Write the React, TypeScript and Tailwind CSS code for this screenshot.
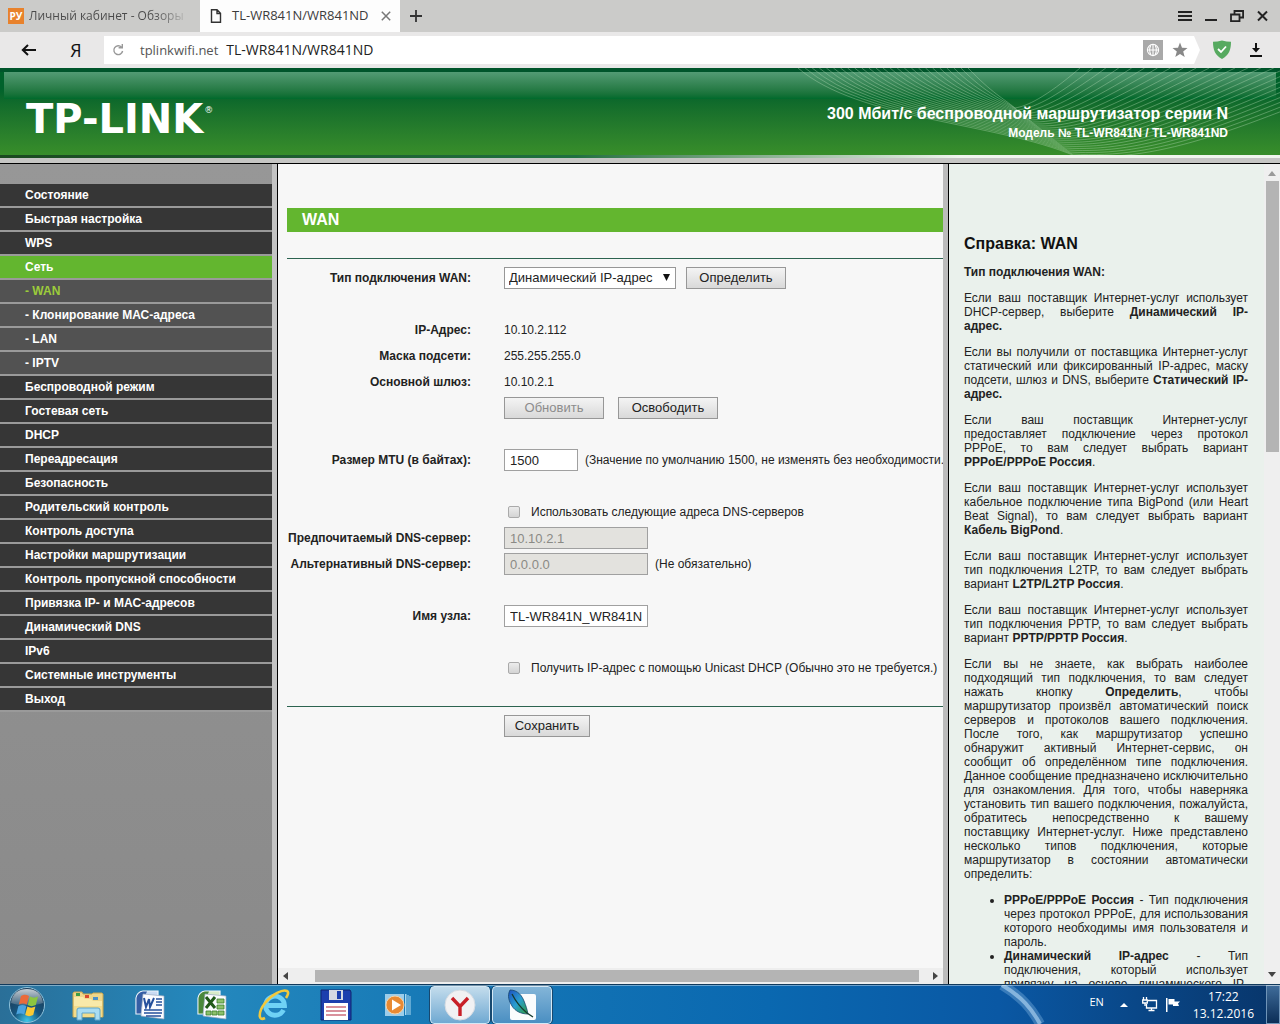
import React from "react";

type Children = { children?: React.ReactNode };

/* ---------- Browser chrome ---------- */

function TabBar() {
  return (
    <div className="flex h-8 shrink-0 items-stretch bg-[#cbcbc9] font-['Open_Sans',sans-serif] text-[13px] text-[#3c3c3c]">
      <button className="flex w-[200px] items-center gap-[5px] pl-2 text-left">
        <span className="flex h-4 w-4 shrink-0 items-center justify-center bg-[#e8822c] text-[10px] font-bold text-white">РУ</span>
        <span className="bg-linear-to-r from-[#4a4a4a] from-80% to-[#b4b4b2] bg-clip-text text-[12px] whitespace-nowrap text-transparent">
          Личный кабинет - Обзоры
        </span>
      </button>
      <div className="flex w-[200px] items-center bg-[#fdfdfd] pl-[10px]">
        <svg width="12" height="16" viewBox="0 0 12 16" fill="none" stroke="#333" strokeWidth="1.4">
          <path d="M1.5 1.7h5.5l3.5 3.6v9H1.5z M7 1.7v3.8h3.5" />
        </svg>
        <span className="flex-1 pl-[10px] whitespace-nowrap">TL-WR841N/WR841ND</span>
        <button aria-label="Закрыть вкладку" className="mr-[9px]">
          <svg width="10" height="10" viewBox="0 0 10 10" stroke="#777" strokeWidth="1.5">
            <path d="M.8.8l8.4 8.4M9.2.8L.8 9.2" />
          </svg>
        </button>
      </div>
      <button aria-label="Новая вкладка" className="pl-[10px]">
        <svg width="12" height="12" viewBox="0 0 12 12" stroke="#333" strokeWidth="1.8">
          <path d="M6 0v12M0 6h12" />
        </svg>
      </button>
      <div className="ml-auto flex items-center gap-[13px] pr-[12px]">
        <button aria-label="Меню">
          <svg width="14" height="12" viewBox="0 0 14 12" stroke="#222" strokeWidth="2">
            <path d="M0 2h14M0 6h14M0 10h14" />
          </svg>
        </button>
        <button aria-label="Свернуть">
          <svg width="12" height="12" viewBox="0 0 12 12" stroke="#222" strokeWidth="2">
            <path d="M0 10h12" />
          </svg>
        </button>
        <button aria-label="Восстановить">
          <svg width="14" height="12" viewBox="0 0 14 12" fill="none" stroke="#222" strokeWidth="1.8">
            <path d="M1 4.5h8.5v6.6H1z M4.5 4V1h8.6v6.5H10" />
          </svg>
        </button>
        <button aria-label="Закрыть">
          <svg width="11" height="12" viewBox="0 0 11 12" stroke="#222" strokeWidth="2">
            <path d="M1 1.5l9 9M10 1.5l-9 9" />
          </svg>
        </button>
      </div>
    </div>
  );
}

function AddressBar() {
  return (
    <div className="flex h-9 shrink-0 items-center bg-[#e9e8e8] font-['Open_Sans',sans-serif] text-[13px]">
      <button aria-label="Назад" className="ml-[21px]">
        <svg width="15" height="12" viewBox="0 0 15 12" fill="none" stroke="#111" strokeWidth="2">
          <path d="M15 6H1.5M7 1L1.8 6 7 11" />
        </svg>
      </button>
      <button className="ml-[34px] w-3 text-[18px] leading-none text-[#111]">Я</button>
      <div className="ml-[22px] flex h-7 min-w-0 flex-1 items-center bg-white pl-2 [clip-path:polygon(0_0,calc(100%-6px)_0,100%_50%,calc(100%-6px)_100%,0_100%)]">
        <svg width="12" height="12" viewBox="0 0 12 12" fill="none" stroke="#999" strokeWidth="1.4">
          <path d="M9.5 3.2A4.4 4.4 0 1 0 10.6 7M10.3 0v3.8H6.6" />
        </svg>
        <p className="flex items-baseline gap-2 pl-4 leading-5 text-[#555]">
          <span>tplinkwifi.net</span>
          <span className="text-[14px] text-[#222]">TL-WR841N/WR841ND</span>
        </p>
        <svg className="ml-auto" width="20" height="20" viewBox="0 0 20 20" fill="none" stroke="#fff" strokeWidth="1.1">
          <path d="M0 0h20v20H0z" fill="#a9a9a9" stroke="none" />
          <circle cx="10" cy="10" r="5.6" />
          <path d="M10 4.4v11.2M4.6 10h10.8M7.8 5.2c-1.4 3-1.4 6.6 0 9.6M12.2 5.2c1.4 3 1.4 6.6 0 9.6" />
        </svg>
        <svg className="mr-[12px] ml-[9px]" width="16" height="16" viewBox="0 0 16 16" fill="#888">
          <path d="M8 .5l2 5.3 5.5.2-4.3 3.5 1.5 5.5L8 11.9 3.3 15l1.5-5.5L.5 6 6 5.8z" />
        </svg>
      </div>
      <svg className="ml-[12px]" width="20" height="20" viewBox="0 0 20 20" fill="none">
        <path d="M10 .5c3 .8 6 1.2 9 1.3 0 8-2 13.5-9 17.2C3 15.3 1 9.8 1 1.8 4 1.7 7 1.3 10 .5z" fill="#57aa60" />
        <path d="M6 9l3 3 5-5.5" stroke="#fff" strokeWidth="1.8" />
      </svg>
      <svg className="mr-[18px] ml-[18px]" width="12" height="14" viewBox="0 0 12 14" fill="#111">
        <path d="M5 0h2v5h3L6 9.5 2 5h3z M0 12h12v2H0z" />
      </svg>
    </div>
  );
}

/* ---------- Router page ---------- */

const waves = Array.from({ length: 25 }, (_, i) => {
  const t = i / 24;
  const sx = 8 + 170 * t;
  const mx = 285 - 60 * t;
  const my = 88 - 48 * t;
  const ex = 600 - 310 * t;
  return `M${sx} 0C${sx + 60 - 35 * t} ${52 - 26 * t} ${mx - 80 + 68 * t} ${my - 34 + 24 * t} ${mx} ${my}C${mx + 90 - 78 * t} ${my + 6 - 8 * t} ${ex - 150 + 115 * t} ${60 - 30 * t} ${ex} 0`;
});

function Banner() {
  return (
    <header className="relative shrink-0 bg-[#c6c6c4] font-bold text-white">
      <div className="h-[87px] border-t-4 border-[#00552b] bg-linear-to-b from-[#00622b] from-20% to-[#388e2a]">
        <div className="mx-1 h-[27px] bg-linear-to-b from-[#529b74] to-[#006a2c]" />
      </div>
      <svg className="absolute top-0 right-0" width="490" height="87" viewBox="0 0 490 87" fill="none" stroke="#b9dcb8" strokeOpacity=".38" strokeWidth="1">
        {waves.map((d) => <path key={d} d={d} />)}
      </svg>
      <div className="absolute inset-x-0 top-0 flex h-[87px] items-start justify-between pr-[52px] pl-[26px]">
        <p className="flex pt-[30px] font-['DejaVu_Sans',sans-serif] text-[40px] leading-[42px]">
          TP-LINK<span className="pt-2 pl-px text-[9px] leading-[9px] font-normal">®</span>
        </p>
        <div className="pt-9 text-right">
          <h1 className="text-[16px] leading-[19px]">300 Мбит/с беспроводной маршрутизатор серии N</h1>
          <p className="pt-[3px] text-[12px] leading-[14px]">Модель № TL-WR841N / TL-WR841ND</p>
        </div>
      </div>
      <div className="h-[3px] bg-linear-to-r from-[#1b4a20] via-[#1f7040] via-45% to-[#f1f6ee] to-75%" />
      <div className="h-[6px] border-b border-black" />
    </header>
  );
}

const menu: [string, string?][] = [
  ["Состояние"], ["Быстрая настройка"], ["WPS"], ["Сеть", "active"],
  ["WAN", "current"], ["Клонирование МАС-адреса", "sub"], ["LAN", "sub"], ["IPTV", "sub"],
  ["Беспроводной режим"], ["Гостевая сеть"], ["DHCP"], ["Переадресация"], ["Безопасность"],
  ["Родительский контроль"], ["Контроль доступа"], ["Настройки маршрутизации"],
  ["Контроль пропускной способности"], ["Привязка IP- и MAC-адресов"], ["Динамический DNS"],
  ["IPv6"], ["Системные инструменты"], ["Выход"],
];

function itemStyle(kind?: string) {
  if (kind === "active") return "bg-[#63b62f]";
  if (kind) return "bg-[#525252]";
  return "bg-[#363636]";
}

function Sidebar() {
  return (
    <nav className="w-[278px] shrink-0 border-r border-black bg-[#c3c3c3] pr-[5px]">
      <ul className="h-full bg-linear-to-b from-[#979797] to-[#8a8a8a] pt-5">
        {menu.map(([name, kind]) => (
          <li key={name} className="border-b-2 border-[#9a9a9a]">
            <a href="#" className={`block h-[22px] pl-[25px] font-bold leading-[22px] text-white ${itemStyle(kind)}`}>
              {kind === "current" ? <span className="text-[#9ccb3b]">- {name}</span> : kind === "sub" ? `- ${name}` : name}
            </a>
          </li>
        ))}
      </ul>
    </nav>
  );
}

function Row({ label, htmlFor, children }: Children & { label?: string; htmlFor?: string }) {
  return (
    <div className="flex h-[26px] items-center gap-[33px]">
      <label htmlFor={htmlFor} className="w-[184px] shrink-0 text-right font-bold whitespace-nowrap">{label}</label>
      <div className="flex items-center whitespace-nowrap">{children}</div>
    </div>
  );
}

function Button({ children, className = "w-[100px]", disabled }: Children & { className?: string; disabled?: boolean }) {
  return (
    <button disabled={disabled} className={`h-[22px] border border-[#979797] bg-linear-to-b from-[#f4f4f4] to-[#d9d9d9] text-[13px] text-[#222] disabled:text-[#8c8c8c] ${className}`}>
      {children}
    </button>
  );
}

const input = "h-[22px] border border-[#a0a0a0] bg-white pl-[5px] text-[13px] text-[#222] disabled:bg-[#e3e2de] disabled:text-[#8a8a85]";
const checkbox = "mr-[11px] ml-1 h-3 w-3 appearance-none rounded-xs border border-[#aaa] bg-linear-to-b from-[#ececec] to-[#d4d4d4]";

function WanForm() {
  return (
    <main className="flex min-w-0 flex-1 flex-col bg-[#f7f7f7] text-[#222]">
      <form className="min-h-0 flex-1 overflow-hidden pt-11 pl-[9px]">
        <h2 className="h-6 bg-[#63b62f] pl-[15px] text-[16px] leading-[23px] font-bold text-white">WAN</h2>
        <div className="mt-[26px] mb-2 border-y border-[#2c6350] pt-[6px] pb-[25px]">
          <Row label="Тип подключения WAN:" htmlFor="type">
            <span className="relative mr-[10px] flex">
              <select id="type" className="h-[22px] w-[172px] appearance-none border border-[#979797] bg-white px-1 text-[13px]">
                <option>Динамический IP-адрес</option>
              </select>
              <svg className="pointer-events-none absolute top-[7px] right-[6px]" width="7" height="7" viewBox="0 0 7 7">
                <path d="M0 0h7L3.5 7z" fill="#111" />
              </svg>
            </span>
            <Button>Определить</Button>
          </Row>
          <Row />
          <Row label="IP-Адрес:">10.10.2.112</Row>
          <Row label="Маска подсети:">255.255.255.0</Row>
          <Row label="Основной шлюз:">10.10.2.1</Row>
          <Row>
            <Button disabled className="mr-[14px] w-[100px]">Обновить</Button>
            <Button>Освободить</Button>
          </Row>
          <Row />
          <Row label="Размер MTU (в байтах):" htmlFor="mtu">
            <input id="mtu" defaultValue="1500" className={`${input} mr-[7px] w-[74px]`} />
            (Значение по умолчанию 1500, не изменять без необходимости.
          </Row>
          <Row />
          <Row>
            <input id="dns" type="checkbox" className={checkbox} />
            <label htmlFor="dns">Использовать следующие адреса DNS-серверов</label>
          </Row>
          <Row label="Предпочитаемый DNS-сервер:" htmlFor="dns1">
            <input id="dns1" disabled defaultValue="10.10.2.1" className={`${input} w-36`} />
          </Row>
          <Row label="Альтернативный DNS-сервер:" htmlFor="dns2">
            <input id="dns2" disabled defaultValue="0.0.0.0" className={`${input} mr-[7px] w-36`} />
            (Не обязательно)
          </Row>
          <Row />
          <Row label="Имя узла:" htmlFor="host">
            <input id="host" defaultValue="TL-WR841N_WR841N" className={`${input} w-36`} />
          </Row>
          <Row />
          <Row>
            <input id="unicast" type="checkbox" className={checkbox} />
            <label htmlFor="unicast">Получить IP-адрес с помощью Unicast DHCP (Обычно это не требуется.)</label>
          </Row>
        </div>
        <Button className="ml-[217px] w-[86px]">Сохранить</Button>
      </form>
      <div className="flex h-4 shrink-0 items-center bg-[#eeeeee] px-[5px]">
        <svg width="5" height="8" viewBox="0 0 5 8"><path d="M5 0v8L0 4z" fill="#444" /></svg>
        <div className="mr-[14px] ml-[27px] h-3 flex-1 bg-[#b4b4b4]" />
        <svg width="5" height="8" viewBox="0 0 5 8"><path d="M0 0v8l5-4z" fill="#444" /></svg>
      </div>
    </main>
  );
}

function Help() {
  return (
    <aside className="flex w-[337px] shrink-0 border-l-[5px] border-[#bcbcbc] bg-[#eaf1ec]">
      <div className="min-w-0 flex-1 overflow-hidden border-l border-black pt-[70px] pr-4 pl-[15px] text-justify leading-[14px] text-[#222] *:mb-3">
        <h2 className="text-left text-[16px] leading-[19px] font-bold text-[#111]">Справка: WAN</h2>
        <h3 className="text-left font-bold">Тип подключения WAN:</h3>
        <p>Если ваш поставщик Интернет-услуг использует DHCP-сервер, выберите <b>Динамический IP-адрес.</b></p>
        <p>Если вы получили от поставщика Интернет-услуг статический или фиксированный IP-адрес, маску подсети, шлюз и DNS, выберите <b>Статический IP-адрес.</b></p>
        <p>Если ваш поставщик Интернет-услуг предоставляет подключение через протокол PPPoE, то вам следует выбрать вариант <b>PPPoE/PPPoE Россия</b>.</p>
        <p>Если ваш поставщик Интернет-услуг использует кабельное подключение типа BigPond (или Heart Beat Signal), то вам следует выбрать вариант <b>Кабель BigPond</b>.</p>
        <p>Если ваш поставщик Интернет-услуг использует тип подключения L2TP, то вам следует выбрать вариант <b>L2TP/L2TP Россия</b>.</p>
        <p>Если ваш поставщик Интернет-услуг использует тип подключения PPTP, то вам следует выбрать вариант <b>PPTP/PPTP Россия</b>.</p>
        <p>Если вы не знаете, как выбрать наиболее подходящий тип подключения, то вам следует нажать кнопку <b>Определить</b>, чтобы маршрутизатор произвёл автоматический поиск серверов и протоколов вашего подключения. После того, как маршрутизатор успешно обнаружит активный Интернет-сервис, он сообщит об определённом типе подключения. Данное сообщение предназначено исключительно для ознакомления. Для того, чтобы наверняка установить тип вашего подключения, пожалуйста, обратитесь непосредственно к вашему поставщику Интернет-услуг. Ниже представлено несколько типов подключения, которые маршрутизатор в состоянии автоматически определить:</p>
        <ul className="list-disc pl-10">
          <li><b>PPPoE/PPPoE Россия</b> - Тип подключения через протокол PPPoE, для использования которого необходимы имя пользователя и пароль.</li>
          <li><b>Динамический IP-адрес</b> - Тип подключения, который использует привязку на основе динамического IP-адреса.</li>
        </ul>
      </div>
      <div className="flex w-4 shrink-0 flex-col items-center bg-[#efefef] py-[7px]">
        <svg width="8" height="5" viewBox="0 0 8 5"><path d="M0 5h8L4 0z" fill="#999" /></svg>
        <div className="mt-[5px] h-[271px] w-[13px] bg-[#b4b4b4]" />
        <svg className="mt-auto" width="8" height="5" viewBox="0 0 8 5"><path d="M0 0h8L4 5z" fill="#444" /></svg>
      </div>
    </aside>
  );
}

/* ---------- Taskbar ---------- */

function StartOrb() {
  return (
    <svg width="38" height="38" viewBox="0 0 38 38">
      <defs>
        <radialGradient id="orb" cx=".5" cy=".95" r=".85">
          <stop offset="0" stopColor="#3ec7e8" /><stop offset=".45" stopColor="#17567f" /><stop offset="1" stopColor="#1b3c58" />
        </radialGradient>
        <linearGradient id="gloss" x2="0" y2="1">
          <stop offset="0" stopColor="#fff" stopOpacity=".75" /><stop offset="1" stopColor="#fff" stopOpacity=".15" />
        </linearGradient>
      </defs>
      <circle cx="19" cy="19" r="17.5" fill="url(#orb)" stroke="#8fc3dc" strokeWidth="1" />
      <path d="M3 17C4 7 11 3 19 3s15 4 16 14c-8 3-24 3-32 0z" fill="url(#gloss)" />
      <path d="M13 10c3-2 5.5-1.5 8 0L18.8 18.5c-2.5-1.5-5.3-1.5-8 0z" fill="#ea6a3a" />
      <path d="M22 10.5c2.5 1.5 5 1.5 8 0L27.8 19c-3 1.5-5.5 1.5-8 0z" fill="#8cc63f" />
      <path d="M10.4 20c2.7-1.5 5.5-1.5 8 0L16.2 28.5c-2.5-1.5-5.3-1.5-8 0z" fill="#4aa3df" />
      <path d="M19.4 20.5c2.5 1.5 5 1.5 8 0L25.2 29c-3 1.5-5.5 1.5-8 0z" fill="#fbc933" />
    </svg>
  );
}

function FolderIcon() {
  return (
    <svg width="34" height="32" viewBox="0 0 34 32">
      <path d="M2 4l1-1h8l1 2h9l1-1h9l1 1v23H2z" fill="#eed68a" stroke="#c9a64d" />
      <path d="M5 4h4v3H5z" fill="#3c9c46" /><path d="M14 6h4v3h-4z" fill="#d6492f" /><path d="M22 8h5v3h-5z" fill="#4a90c8" />
      <path d="M3 8h9l2 2h6l2 2h9v16H3z" fill="#f9e9a9" />
      <path d="M3 17h28v11H3z" fill="#f3dc8c" />
      <path d="M6 31V21q0-2 2-2h19q2 0 2 2v10h-5v-7H11v7z" fill="#a9dcf2" stroke="#5fa5cc" />
    </svg>
  );
}

function OfficeIcon({ excel }: { excel?: boolean }) {
  const c = excel ? "#3a7d2c" : "#25509c";
  return (
    <svg width="32" height="32" viewBox="0 0 32 32">
      <path d="M2 25V9q1-6 7-7h15v23z" fill={excel ? "#d9ecc9" : "#c9dbf3"} stroke="#eef4fa" strokeWidth="1.2" />
      <path d="M2.5 24.5V9q1-5.5 6.5-6.5h4Q8 12 7 24.5z" fill={c} opacity=".9" />
      <path d="M9 5l21 2v23L7 27z" fill="#fbfcff" stroke="#9aa9c0" strokeWidth=".7" />
      {excel ? (
        <g fill="none" stroke={c}>
          <path d="M21 10h7v4h-7zM21 16h7v4h-7zM10 22h5v4h-5zM16 22h5v4h-5zM22 22h6v4h-6z" fill="#8dc06c" strokeWidth=".8" />
          <path d="M10 8l9 11M19 8l-9 11" stroke="#22591a" strokeWidth="3" />
        </g>
      ) : (
        <g fill="none" stroke={c}>
          <path d="M10 9l2 9 3-8 1 8 4-9" strokeWidth="2" />
          <path d="M22 10h6M22 13h6M22 16h6M10 21h18M10 24h18M12 27h15" strokeWidth="1.5" />
        </g>
      )}
    </svg>
  );
}

function ExplorerIcon() {
  return (
    <svg width="34" height="34" viewBox="0 0 34 34" fill="none">
      <path d="M26.5 22a9.5 9.5 0 1 1 1-4.5H10" stroke="#1f7fc0" strokeWidth="6.5" />
      <path d="M26.5 22a9.5 9.5 0 1 1 1-4.5H10" stroke="#6fd2f5" strokeWidth="4.8" />
      <path d="M8 30C1 34 1 24 8 15S26 1 30 3c2 1 1 4-1 7" stroke="#f2c83c" strokeWidth="2.6" />
    </svg>
  );
}

function FloppyIcon() {
  return (
    <svg width="32" height="32" viewBox="0 0 32 32">
      <path d="M1 1h29l1 2v28H1z" fill="#1c3fae" stroke="#11246e" />
      <path d="M9 1h14v10H9z" fill="#d5d9e2" /><path d="M17 2h4v8h-4z" fill="#1c3fae" />
      <path d="M4 14h24v17H4z" fill="#fff" />
      <path d="M6 18h20M6 22h20M6 26h20" stroke="#b3243b" strokeWidth="1.2" />
    </svg>
  );
}

function PlayerIcon() {
  return (
    <svg width="28" height="26" viewBox="0 0 28 26">
      <path d="M1 2h19v22H1z" fill="#9bcdea" />
      <path d="M21 2h1.5v21H21zM23.5 3h1v20h-1zM25.5 4h1v19h-1z" fill="#a9d8f0" />
      <circle cx="11" cy="13" r="9" fill="#e88a33" stroke="#f7d3a6" />
      <path d="M8 7.5l9 5.5-9 5.5z" fill="#fff" />
    </svg>
  );
}

function YandexIcon() {
  return (
    <svg width="32" height="32" viewBox="0 0 32 32">
      <circle cx="16" cy="16" r="15" fill="#f1f1f3" stroke="#d4dbe2" />
      <path d="M8 9l8 8.5L24 9M16 17v10" fill="none" stroke="#c81f27" strokeWidth="3.4" />
    </svg>
  );
}

function FeatherIcon() {
  return (
    <svg width="32" height="32" viewBox="0 0 32 32">
      <defs>
        <linearGradient id="feather" x2="1" y2="1">
          <stop offset="0" stopColor="#1d4fc0" /><stop offset=".5" stopColor="#2aa0d0" /><stop offset="1" stopColor="#2e9c3c" />
        </linearGradient>
      </defs>
      <rect x="4" y="5" width="26" height="26" rx="2" fill="#fafcfd" />
      <path d="M4 1c8 0 12 6 14 11 2 5 3 8 4 13-7 0-13-3-16-8S1 7 4 1z" fill="url(#feather)" stroke="#15456d" strokeWidth=".8" />
      <path d="M6 5c4 8 9 14 15 19l6 4" fill="none" stroke="#153a2e" strokeWidth="1.3" />
    </svg>
  );
}

const apps = [
  { name: "Проводник", icon: <FolderIcon /> },
  { name: "Word", icon: <OfficeIcon /> },
  { name: "Excel", icon: <OfficeIcon excel /> },
  { name: "Internet Explorer", icon: <ExplorerIcon /> },
  { name: "Total Commander", icon: <FloppyIcon /> },
  { name: "Проигрыватель", icon: <PlayerIcon /> },
  { name: "Яндекс.Браузер", icon: <YandexIcon />, open: "from-[#c3dcec] to-[#6fa9d2]" },
  { name: "Редактор", icon: <FeatherIcon />, open: "from-[#83b5d8] to-[#4a8fc2]" },
];

function Taskbar() {
  return (
    <footer className="relative flex h-10 shrink-0 items-center border-t border-[#123a5c] bg-[linear-gradient(90deg,#2a6f98,#2488bd_16%,#1678b6_35%,#0a68b0_60%,#0a58a4_78%,#08356a)] text-[12px] text-white">
      <svg className="absolute top-0 right-[200px]" width="100" height="39" viewBox="0 0 100 39" fill="none">
        <path d="M22 0C42 12 52 24 60 39" stroke="#8fbfe8" strokeOpacity=".35" strokeWidth="10" />
        <path d="M22 0C42 12 52 24 60 39" stroke="#b8daf5" strokeOpacity=".6" strokeWidth="4" />
      </svg>
      <div className="absolute inset-x-0 top-0 h-px bg-white/40" />
      <button aria-label="Пуск" className="ml-2">
        <StartOrb />
      </button>
      <div className="ml-3 flex gap-[2px]">
        {apps.map((a) => (
          <button key={a.name} aria-label={a.name} className={`flex h-[38px] w-[60px] items-center justify-center ${a.open ? `rounded-sm border border-[#d4e8f5] bg-linear-to-b outline outline-[#17486f] ${a.open}` : ""}`}>
            {a.icon}
          </button>
        ))}
      </div>
      <div className="ml-auto flex h-full items-center font-['Open_Sans',sans-serif]">
        <span className="pb-[4px] text-[11px]">EN</span>
        <svg className="ml-4" width="8" height="4" viewBox="0 0 8 4"><path d="M0 4h8L4 0z" fill="#fff" /></svg>
        <svg className="ml-[14px]" width="16" height="15" viewBox="0 0 16 15" fill="none" stroke="#fff" strokeWidth="1.3">
          <path d="M6 3.5h8.5v7.5H4.5V7M6.5 13.5h6M9.5 11v2.5M1.5 0v3M4.5 0v3M.7 3h4.6v3H.7zM3 6v3" />
        </svg>
        <svg className="ml-2" width="15" height="14" viewBox="0 0 15 14" fill="#fff">
          <path d="M0 0h1.5v14H0zM2.5 1h6v2.5H14L12 5.5 13 8H7V6.5H2.5z" />
        </svg>
        <time className="ml-3 text-center leading-[17px]">17:22<br />13.12.2016</time>
        <div className="ml-3 h-full w-[14px] border border-[#6f94b8] bg-linear-to-b from-[#3f6c9a] to-[#0b2e57]" />
      </div>
    </footer>
  );
}

export default function App() {
  return (
    <div className="flex h-screen flex-col overflow-hidden font-['Liberation_Sans',Arial,sans-serif] text-[12px]">
      <TabBar />
      <AddressBar />
      <Banner />
      <div className="flex min-h-0 flex-1">
        <Sidebar />
        <WanForm />
        <Help />
      </div>
      <Taskbar />
    </div>
  );
}
